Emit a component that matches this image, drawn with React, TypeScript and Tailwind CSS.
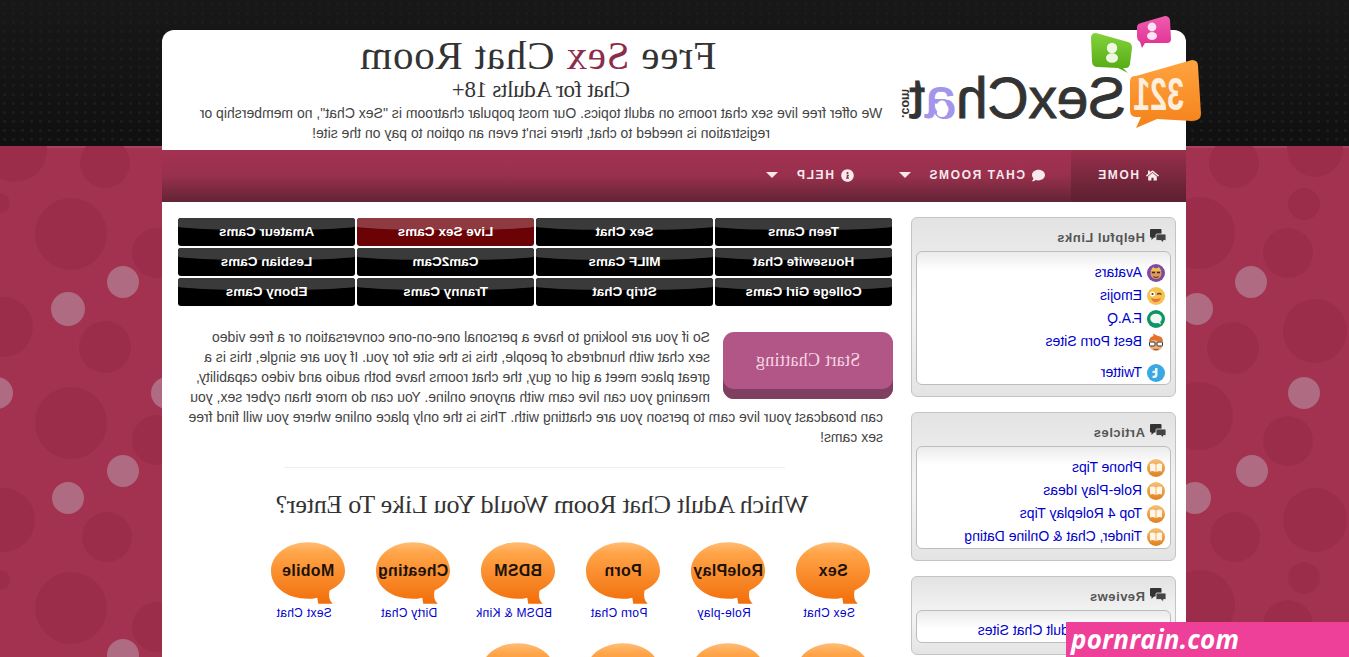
import type { ReactNode } from "react";
import { FaComment, FaHome, FaInfoCircle } from "react-icons/fa";

const darkDots = [
  [15, 150, 32], [105, 163, 25], [0, 203, 10], [71, 234, 36], [157, 253, 25], [3, 327, 30], [105, 347, 26],
  [71, 423, 36], [157, 440, 25], [3, 520, 32], [107, 537, 25], [0, 580, 10], [71, 608, 36], [157, 627, 25],
  [1234, 163, 25], [1315, 149, 28], [1304, 204, 16], [1199, 233, 36], [1288, 253, 25], [1315, 331, 32],
  [1233, 348, 26], [1199, 416, 34], [1288, 441, 25], [1304, 578, 16], [1315, 520, 32], [1235, 537, 25],
  [1200, 605, 35], [1288, 625, 25],
];

const lightDots = [
  [123, 282, 16], [68, 309, 17], [-3, 393, 16], [167, 393, 16], [123, 471, 16], [68, 498, 16], [123, 655, 16],
  [1251, 282, 16], [1197, 309, 16], [1304, 393, 16], [1252, 471, 16], [1195, 498, 16],
];

const camLinks = [
  "Teen Cams", "Sex Chat", "Live Sex Cams", "Amateur Cams",
  "Housewife Chat", "MILF Cams", "Cam2Cam", "Lesbian Cams",
  "College Girl Cams", "Strip Chat", "Tranny Cams", "Ebony Cams",
];

const rooms = [
  { bubble: "Sex", label: "Sex Chat" },
  { bubble: "RolePlay", label: "Role-play" },
  { bubble: "Porn", label: "Porn Chat" },
  { bubble: "BDSM", label: "BDSM & Kink" },
  { bubble: "Cheating", label: "Dirty Chat" },
  { bubble: "Mobile", label: "Sext Chat" },
  { bubble: "Gay", label: "Gay Chat" },
  { bubble: "Teen", label: "Teen Chat" },
  { bubble: "Adult", label: "Adult Chat" },
  { bubble: "Cams", label: "Cam Chat" },
];

function ChatsIcon() {
  return (
    <svg width="16" height="15" viewBox="0 0 16 15" className="-mt-[3px] shrink-0">
      <path d="M5.5 0 H15 Q16 0 16 1 V7.5 Q16 8.5 15 8.5 H14.5 V11 L12 8.5 H5.5 Q4.5 8.5 4.5 7.5 V1 Q4.5 0 5.5 0 Z" fill="#333" />
      <path d="M1 5 H9 Q10 5 10 6 V10.5 Q10 11.5 9 11.5 H5 L2.5 14 V11.5 H1 Q0 11.5 0 10.5 V6 Q0 5 1 5 Z" fill="#444" stroke="#eee" strokeWidth="0.8" />
    </svg>
  );
}

function AvatarIcon() {
  return (
    <svg width="18" height="18" viewBox="0 0 18 18" className="shrink-0">
      <circle cx="9" cy="9" r="9" fill="#7d4aa6" />
      <circle cx="9" cy="9.5" r="5.5" fill="#d99a5b" />
      <path d="M3.5 7 L6 3 L9 5 L12 3 L14.5 7 Z" fill="#eec24c" />
      <path d="M5 8.5h3M10 8.5h3" stroke="#40261a" strokeWidth="1.4" />
      <path d="M6.5 12.5 Q9 14.5 11.5 12.5" stroke="#70301f" strokeWidth="1.2" fill="none" />
    </svg>
  );
}

function EmojiIcon() {
  return (
    <svg width="18" height="18" viewBox="0 0 18 18" className="shrink-0">
      <circle cx="9" cy="9" r="9" fill="#f5c350" />
      <circle cx="12.5" cy="7" r="2.5" fill="#fff" />
      <circle cx="12.5" cy="7" r="1.1" fill="#4a3015" />
      <path d="M3.5 7.5 Q6 5.5 8 7.5" stroke="#6b4416" strokeWidth="1.2" fill="none" />
      <path d="M4 11 Q9 13 14 11 Q12.5 16 8.5 15 Q5 14.5 4 11" fill="#e8734a" />
    </svg>
  );
}

function FaqIcon() {
  return (
    <svg width="18" height="18" viewBox="0 0 18 18" className="shrink-0">
      <circle cx="9" cy="9" r="9" fill="#0f9465" />
      <ellipse cx="9" cy="8.5" rx="5.8" ry="4.8" fill="#f0f7f4" />
      <path d="M5 11 L4 14.5 L8 12.5 Z" fill="#f0f7f4" />
    </svg>
  );
}

function NerdIcon() {
  return (
    <svg width="18" height="18" viewBox="0 0 18 18" className="shrink-0">
      <circle cx="9" cy="11" r="7" fill="#efb27d" />
      <path d="M2 9 Q2 3 7 3 L12 0.5 L11.5 3 Q16 4 16 9 Q12 5.5 8 8 Q4.5 7 2 9" fill="#e5702a" />
      <rect x="2.5" y="9" width="5.5" height="4" rx="1" fill="#fff" stroke="#333" />
      <rect x="10" y="9" width="5.5" height="4" rx="1" fill="#fff" stroke="#333" />
      <path d="M6.5 16 Q9 17.5 11.5 16" stroke="#8a4a25" fill="none" />
    </svg>
  );
}

function TwitterIcon() {
  return (
    <svg width="18" height="18" viewBox="0 0 18 18" className="shrink-0">
      <circle cx="9" cy="9" r="9" fill="#3aa8e2" />
      <path d="M7.5 4 L10 4 L10 6.8 L12.5 6.8 L12.5 9 L10 9 L10 10.5 Q10 12 12.5 11.8 L12.5 14 Q7.5 14.6 7.5 11 Z" fill="#eaf6fc" />
    </svg>
  );
}

function BookIcon() {
  return (
    <svg width="18" height="18" viewBox="0 0 18 18" className="shrink-0">
      <defs>
        <linearGradient id="bookFill" x1="0" y1="0" x2="0" y2="1">
          <stop offset="0" stopColor="#f6c27a" />
          <stop offset="1" stopColor="#e07f1c" />
        </linearGradient>
      </defs>
      <circle cx="9" cy="9" r="9" fill="url(#bookFill)" />
      <path d="M3 5 Q6.5 4 8.6 5.5 L8.6 13 Q6 11.6 3 12.4 Z" fill="#fff6e6" />
      <path d="M15 5 Q11.5 4 9.4 5.5 L9.4 13 Q12 11.6 15 12.4 Z" fill="#fff6e6" />
    </svg>
  );
}

function RoomBubble({ text }: { text: string }) {
  return (
    <svg width="74" height="62" viewBox="0 0 72 60" className="shrink-0">
      <defs>
        <linearGradient id="roomFill" x1="0" y1="0" x2="0" y2="1">
          <stop offset="0" stopColor="#ffbd75" />
          <stop offset="0.18" stopColor="#ffa448" />
          <stop offset="1" stopColor="#f26e0a" />
        </linearGradient>
      </defs>
      <path d="M36 0 C56 0 72 12 72 28 C72 44 56 55 36 55 C33 55 30 55 27 54 L26 60 L12 60 Q17 55 15 47 C5 42 0 36 0 28 C0 12 16 0 36 0 Z" fill="url(#roomFill)" />
      <text x="36" y="33" textAnchor="middle" fontFamily="'Liberation Sans', Arial, sans-serif" fontWeight="700" fontSize="15.5" fill="#1c1208">
        {text}
      </text>
    </svg>
  );
}

function Logo() {
  return (
    <svg width="295" height="120" viewBox="0 0 295 120" className="shrink-0 overflow-visible">
      <defs>
        <linearGradient id="orangeFill" x1="0" y1="0" x2="0" y2="1">
          <stop offset="0" stopColor="#ffa43f" />
          <stop offset="1" stopColor="#f5821a" />
        </linearGradient>
        <linearGradient id="greenFill" x1="0" y1="0" x2="0" y2="1">
          <stop offset="0" stopColor="#84d23c" />
          <stop offset="1" stopColor="#52a812" />
        </linearGradient>
        <linearGradient id="pinkFill" x1="0" y1="0" x2="0" y2="1">
          <stop offset="0" stopColor="#f05cae" />
          <stop offset="1" stopColor="#e02f93" />
        </linearGradient>
      </defs>
      <path d="M50 46 Q56 45 56 52 L56 80 Q56 87 50 87 L45 87 L50 98 L29 89 L-6 91 Q-15 91 -15 84 L-12 36 Q-12 30 -6 30 Z" fill="url(#orangeFill)" />
      <text transform="translate(2 80) scale(0.66 1)" fontFamily="'Liberation Sans', Arial, sans-serif" fontWeight="700" fontSize="46" fill="#fdeedd">
        321
      </text>
      <path d="M90 3 L58 12 Q54 13 54 18 L56 34 Q57 38 60 38 L63 38 L58 43 L68 38 L88 37 Q94 37 94 31 L95 8 Q95 3 90 3 Z" fill="url(#greenFill)" />
      <circle cx="74" cy="18" r="5.2" fill="#eef7e2" />
      <ellipse cx="74" cy="28" rx="6" ry="4.8" fill="#eef7e2" />
      <path d="M45 -7 L21 -14 Q17 -14 16 -10 L15 9 Q15 13 19 13 L41 13 L44 18 L46 12 Q49 10 49 7 L49 -3 Q49 -6 45 -7 Z" fill="url(#pinkFill)" />
      <circle cx="34" cy="-3" r="4.4" fill="#fbe3f1" />
      <ellipse cx="34" cy="6" rx="5" ry="4" fill="#fbe3f1" />
      <text x="60" y="88" fontFamily="'Liberation Sans', Arial, sans-serif" fontSize="57" letterSpacing="-0.3" fill="#333" stroke="#333" strokeWidth="0.9">
        SexCh<tspan fill="#a295ea" stroke="#a295ea">a</tspan>t
      </text>
      <circle cx="244" cy="75" r="4.6" fill="#fff" />
      <ellipse cx="244" cy="83" rx="5.2" ry="4" fill="#fff" />
      <text transform="translate(284 88) rotate(-90)" fontFamily="'Liberation Sans', Arial, sans-serif" fontWeight="700" fontSize="12.5" fill="#333">
        .com
      </text>
    </svg>
  );
}

function NavCaret() {
  return <span className="ml-[17px] h-0 w-0 border-x-[6px] border-t-[6px] border-x-transparent border-t-[#f4e6ea]" />;
}

function SideBox({ title, top = "pt-[9px]", children }: { title: string; top?: string; children: ReactNode }) {
  return (
    <section className="rounded-md border border-[#c4c4c4] bg-linear-to-b from-[#e3e3e3] via-[#f4f4f4] to-[#e4e4e4] px-1 pb-[11px]">
      <h3 className="flex h-[33px] items-center gap-[5px] pl-[5px] pt-[6px] text-[13px] font-bold tracking-[0.5px] text-[#555]">
        <ChatsIcon />
        {title}
      </h3>
      <ul className={`rounded-md border border-[#bdbdbd] bg-[linear-gradient(to_bottom,#ebebeb,#fff_18px)] pl-[5px] ${top}`}>{children}</ul>
    </section>
  );
}

function SideLink({ icon, text, className = "" }: { icon: ReactNode; text: string; className?: string }) {
  return (
    <li className={`flex h-[23px] items-center gap-[5px] text-[14px] text-[#0000cc] ${className}`}>
      {icon}
      <a href="#">{text}</a>
    </li>
  );
}

export default function App() {
  return (
    <div className="relative h-[657px] overflow-hidden bg-[#a33251] font-['Liberation_Sans',Arial,sans-serif]">
      <div className="h-[146px] bg-[radial-gradient(circle,#1c1c1c_1.2px,transparent_2px),linear-gradient(to_bottom,#181818,#101010)] bg-[length:9px_9px,100%_100%]" />
      <div className="h-[2px] bg-[#aa4160]" />

      {/* circles of the page background */}
      <svg width="1349" height="511" viewBox="0 146 1349 511" className="absolute left-0 top-[146px]">
        {darkDots.map(([x, y, r]) => (
          <circle key={`${x}-${y}`} cx={x} cy={y} r={r} fill="#9b2d4b" />
        ))}
        {lightDots.map(([x, y, r]) => (
          <circle key={`${x}-${y}`} cx={x} cy={y} r={r} fill="#af6b81" />
        ))}
      </svg>

      {/* the whole site is mirrored in the picture */}
      <div className="relative -mt-[118px] -scale-x-100">
        <div className="ml-[163px] w-[1024px] rounded-t-xl bg-white">
          <header className="flex h-[120px]">
            <Logo />
            <div className="w-[700px] text-center">
              <h1 className="pl-[6px] pt-[2px] font-['Liberation_Serif',serif] text-[41px] leading-[46px] tracking-[0.8px] text-[#333]">
                Free <span className="text-[#8c2c4c]">Sex</span> Chat Room
              </h1>
              <h2 className="font-['Liberation_Serif',serif] text-[23px] leading-[23px] tracking-[-0.3px] text-[#333]">Chat for Adults 18+</h2>
              <p className="mt-[2px] text-[14px] leading-[20px] text-[#444]">
                We offer free live sex chat rooms on adult topics. Our most popular chatroom is "Sex Chat", no membership or registration is needed to chat, there isn't even an option to pay on the site!
              </p>
            </div>
          </header>

          <nav className="flex h-[52px] items-center bg-linear-to-b from-[#a33251] via-[#98304d] to-[#632436] pb-[2px] text-[12px] font-bold tracking-[1.6px] text-[#f7e9ed]">
            <a href="#" className="-mb-[2px] flex h-[52px] w-[115px] items-center gap-[7px] bg-linear-to-b from-[#9b2f4c] to-[#5b2031] pb-[2px] pl-[27px]">
              <FaHome className="text-[13px]" />
              HOME
            </a>
            <a href="#" className="ml-[26px] flex items-center gap-[7px]">
              <FaComment className="-scale-x-100 text-[13px]" />
              CHAT ROOMS
            </a>
            <NavCaret />
            <a href="#" className="ml-[45px] flex items-center gap-[7px]">
              <FaInfoCircle className="text-[13px]" />
              HELP
            </a>
            <NavCaret />
          </nav>

          <div className="flex h-[455px] items-start gap-[19px] pl-[10px]">
            <aside className="mt-[15px] flex w-[265px] shrink-0 flex-col gap-[15px]">
              <SideBox title="Helpful Links">
                <SideLink icon={<AvatarIcon />} text="Avatars" />
                <SideLink icon={<EmojiIcon />} text="Emojis" />
                <SideLink icon={<FaqIcon />} text="F.A.Q" />
                <SideLink icon={<NerdIcon />} text="Best Porn Sites" />
                <SideLink icon={<TwitterIcon />} text="Twitter" className="mt-[8px]" />
              </SideBox>
              <SideBox title="Articles">
                <SideLink icon={<BookIcon />} text="Phone Tips" />
                <SideLink icon={<BookIcon />} text="Role-Play Ideas" />
                <SideLink icon={<BookIcon />} text="Top 4 Roleplay Tips" />
                <SideLink icon={<BookIcon />} text="Tinder, Chat & Online Dating" />
              </SideBox>
              <SideBox title="Reviews" top="pt-[8px]">
                <SideLink icon={<FaqIcon />} text="Best Free Adult Chat Sites" />
              </SideBox>
            </aside>

            <main className="w-[714px] shrink-0 pt-[16px]">
              <div className="grid grid-cols-4 gap-[2px]">
                {camLinks.map((name) => (
                  <a
                    key={name}
                    href="#"
                    className={`relative flex h-[28px] items-center justify-center overflow-hidden rounded-[3px] pt-[1px] text-[13.5px] font-bold text-white ${name === "Live Sex Cams" ? "bg-[#6a0206]" : "bg-black"}`}
                  >
                    <span className={`absolute inset-x-0 top-0 h-[12px] rounded-b-[50%_30%] ${name === "Live Sex Cams" ? "bg-[#8f3a40]" : "bg-[#3a3a3a]"}`} />
                    <span className="relative">{name}</span>
                  </a>
                ))}
              </div>

              <div className="mt-[21px] pl-[9px] pr-[9.5px] text-[14px] leading-[20px] text-[#444]">
                <a
                  href="#"
                  className="float-left -ml-[10px] mr-[13px] mt-[5px] flex h-[67px] w-[170px] items-center justify-center rounded-[11px] bg-[#b25687] pb-[11px] font-['Liberation_Serif',serif] text-[18px] tracking-[0.3px] text-[#f5d5e4] shadow-[inset_0_-10px_0_#7e3f60]"
                >
                  Start Chatting
                </a>
                <p>
                  So if you are looking to have a personal one-on-one conversation or a free video sex chat with hundreds of people, this is the site for you. If you are single, this is a great place meet a girl or guy, the chat rooms have both audio and video capability, meaning you can live cam with anyone online. You can do more than cyber sex, you can broadcast your live cam to person you are chatting with. This is the only place online where you will find free sex cams!
                </p>
              </div>

              <hr className="mx-auto mt-[20px] w-[501px] border-[#eeeeee]" />
              <h2 className="mt-[21px] pr-[14px] text-center font-['Liberation_Serif',serif] text-[26px] leading-[32px] tracking-[-0.24px] text-[#333]">
                Which Adult Chat Room Would You Like To Enter?
              </h2>

              <div className="mt-[21px] flex flex-wrap pl-[6px]">
                {rooms.map((room) => (
                  <a key={room.label} href="#" className="flex h-[101px] w-[105px] flex-col items-center text-[12px] tracking-[0.3px] text-[#0000cc]">
                    <RoomBubble text={room.bubble} />
                    <span className="pl-[9px]">{room.label}</span>
                  </a>
                ))}
              </div>
            </main>
          </div>
        </div>
      </div>

      {/* banner laid over the corner of the page */}
      <div className="absolute bottom-0 right-0 flex h-[35px] w-[283px] items-center bg-[#ee4099] pl-[5px] font-['Open_Sans',sans-serif] text-[26px] font-bold italic tracking-[0.2px] text-white">
        pornrain.com
      </div>
    </div>
  );
}
